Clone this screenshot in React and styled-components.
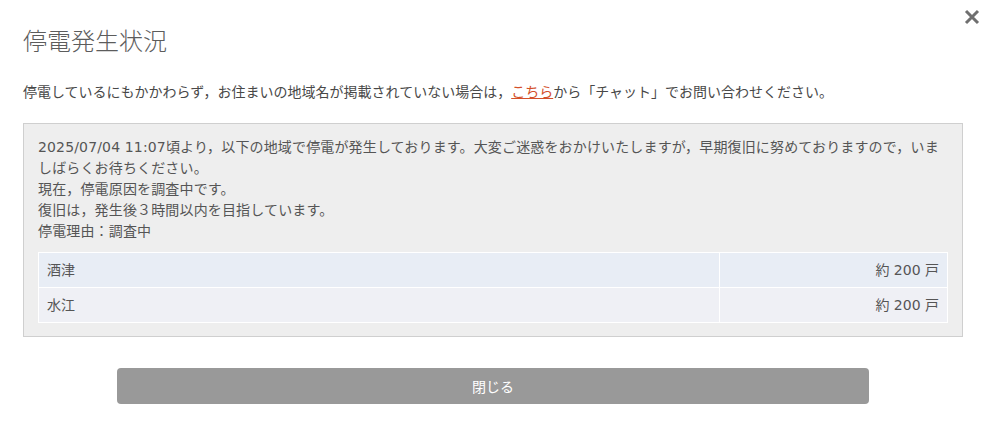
import React from 'react';
import styled, { createGlobalStyle } from 'styled-components';

const GlobalStyle = createGlobalStyle`
  body {
    margin: 0;
    background: #fff;
    font-family: "DejaVu Sans", "Noto Sans CJK JP", sans-serif;
    color: #555;
  }
`;

// Modal
const Modal = styled.div`
  position: relative;
  width: 940px;
  padding: 25px 18px 0 23px;
`;

const CloseButton = styled.button`
  position: absolute;
  top: 8px;
  right: 0;
  width: 18px;
  height: 18px;
  padding: 0;
  border: none;
  background: none;
  cursor: pointer;
`;

const Title = styled.h1`
  margin: 0;
  font-size: 24px;
  line-height: 34px;
  font-weight: 300;
  color: #5c5c5c;
`;

const Lead = styled.p`
  margin: 23px 0 0;
  font-size: 14px;
  line-height: 21px;
  color: #484848;

  & a {
    color: #d4502a;
    text-decoration: underline;
  }
`;

// Notice box
const Notice = styled.div`
  margin-top: 20px;
  padding: 13px 14px 13px;
  background: #eeeeee;
  border: 1px solid #cfcfcf;
  font-size: 14px;
  line-height: 21px;
  letter-spacing: 0.15px;
  color: #555;
`;

const Line = styled.div``;

const Areas = styled.table`
  width: 100%;
  margin-top: 10px;
  border-collapse: collapse;
  font-size: 14px;
  letter-spacing: 0;
`;

const Row = styled.tr`
  background: ${p => (p.$odd ? '#e8edf5' : '#eff0f5')};
`;

const Cell = styled.td`
  height: 34px;
  padding: 0 8px;
  border: 1px solid #fff;
  text-align: ${p => (p.$right ? 'right' : 'left')};
  width: ${p => (p.$right ? '211px' : 'auto')};
  color: #555;
`;

const Footer = styled.div`
  display: flex;
  justify-content: center;
  margin-top: 31px;
`;

const Button = styled.button`
  width: 752px;
  height: 36px;
  border: none;
  border-radius: 4px;
  background: #999;
  color: #fff;
  font-family: inherit;
  font-size: 14px;
`;

const areas = [
  { name: '酒津', count: '約 200 戸' },
  { name: '水江', count: '約 200 戸' }
];

const App = () => (
  <>
    <GlobalStyle />
    <Modal>
      <CloseButton aria-label="閉じる">
        <svg width="18" height="18" viewBox="0 0 18 18">
          <path d="M3 3 L15 15 M15 3 L3 15" stroke="#6f6f6f" strokeWidth="3" />
        </svg>
      </CloseButton>

      <Title>停電発生状況</Title>

      <Lead>
        停電しているにもかかわらず，お住まいの地域名が掲載されていない場合は，
        <a href="#chat">こちら</a>から「チャット」でお問い合わせください。
      </Lead>

      <Notice>
        <Line>
          2025/07/04 11:07頃より，以下の地域で停電が発生しております。大変ご迷惑をおかけいたしますが，早期復旧に努めておりますので，いましばらくお待ちください。
        </Line>
        <Line>現在，停電原因を調査中です。</Line>
        <Line>復旧は，発生後３時間以内を目指しています。</Line>
        <Line>停電理由：調査中</Line>

        <Areas>
          <tbody>
            {areas.map((a, i) => (
              <Row key={a.name} $odd={i % 2 === 0}>
                <Cell>{a.name}</Cell>
                <Cell $right>{a.count}</Cell>
              </Row>
            ))}
          </tbody>
        </Areas>
      </Notice>

      <Footer>
        <Button>閉じる</Button>
      </Footer>
    </Modal>
  </>
);

export default App;
